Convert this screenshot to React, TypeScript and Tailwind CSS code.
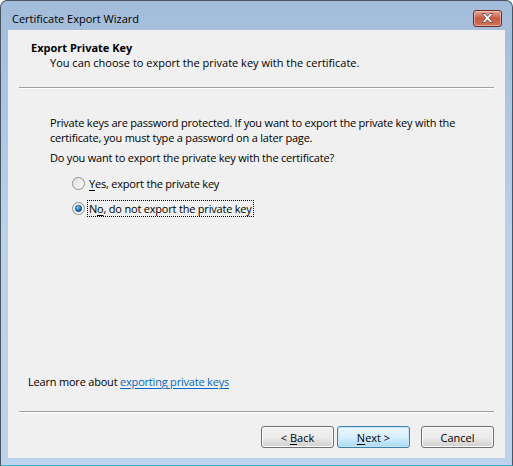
function Radio({ checked }: { checked?: boolean }) {
  return (
    <svg width="13" height="13" viewBox="0 0 13 13" className="shrink-0">
      <defs>
        <linearGradient id="rbg" x1="0" y1="0" x2="1" y2="1">
          <stop offset="0" stopColor="#d6d6d6" />
          <stop offset="1" stopColor="#ffffff" />
        </linearGradient>
        <radialGradient id="rdot" cx="0.4" cy="0.35" r="0.7">
          <stop offset="0" stopColor="#8fd1ff" />
          <stop offset="0.5" stopColor="#2a7fc8" />
          <stop offset="1" stopColor="#0d3f7a" />
        </radialGradient>
      </defs>
      <circle cx="6.5" cy="6.5" r="6" fill="url(#rbg)" stroke="#8e8f8f" strokeWidth="1" />
      <circle cx="6.5" cy="6.5" r="4.5" fill="none" stroke="#f4f4f4" strokeWidth="1" />
      {checked && <circle cx="6.5" cy="6.5" r="3.2" fill="url(#rdot)" stroke="#1d4f86" strokeWidth="0.6" />}
    </svg>
  );
}

function CloseButton() {
  return (
    <div className="w-[29px] h-[17px] rounded-[3px] border border-[#6d2b25] bg-gradient-to-b from-[#e6a797] via-[#c75a41] to-[#d0745c] flex items-center justify-center shadow-[inset_0_0_0_1px_rgba(255,220,210,0.5)]">
      <svg width="13" height="10" viewBox="0 0 13 10">
        <path
          d="M1 0.5 H4 L6.5 3.3 L9 0.5 H12 L8.2 5 L12 9.5 H9 L6.5 6.7 L4 9.5 H1 L4.8 5 Z"
          fill="#ffffff"
          stroke="#5a3a36"
          strokeWidth="0.7"
          strokeLinejoin="round"
        />
      </svg>
    </div>
  );
}

function Button({ children, primary }: { children: React.ReactNode; primary?: boolean }) {
  return (
    <div
      className={
        primary
          ? "w-[73px] h-[22px] rounded-[3px] border border-[#3c7fb1] bg-gradient-to-b from-[#eaf6fd] via-[#d9f0fc] to-[#a7d9f5] shadow-[inset_0_0_0_1px_#c6e6f8] flex items-center justify-center text-black"
          : "w-[73px] h-[22px] rounded-[3px] border border-[#707070] bg-gradient-to-b from-[#f2f2f2] via-[#ebebeb] to-[#cfcfcf] shadow-[inset_0_0_0_1px_#fcfcfc] flex items-center justify-center text-black"
      }
    >
      <span className="whitespace-pre">{children}</span>
    </div>
  );
}

function Separator() {
  return <div className="border-t border-[#a0a0a0] border-b border-b-white" />;
}

export default function App() {
  return (
    <div className="w-[513px] h-[466px] bg-white font-['Open_Sans',sans-serif] text-[11px] leading-[15px] text-black">
      <div className="w-full h-full rounded-t-[7px] border border-[#4a5563] border-b-[#36b0d6] bg-gradient-to-b from-[#a2bcda] via-[#bad1ea] to-[#bcd3eb] flex flex-col px-[7px] pb-[7px]">
        {/* title bar */}
        <div className="h-[29px] flex items-center pt-[5px] pl-[4px] pr-[3px]">
          <span className="flex-1 text-[11px] text-black">Certificate Export Wizard</span>
          <CloseButton />
        </div>

        {/* client area */}
        <div className="flex-1 bg-[#f0f0f0] flex flex-col px-[11px] pb-[10px] tracking-[-0.2px]">
          <div className="pt-[10px] pl-[12px] tracking-normal">
            <div className="font-bold">Export Private Key</div>
            <div className="pl-[19px]">You can choose to export the private key with the certificate.</div>
          </div>

          <div className="mt-[17px]">
            <Separator />
          </div>

          <div className="pl-[31px] mt-[26px]">
            <div className="whitespace-nowrap">
              Private keys are password protected. If you want to export the private key with the
            </div>
            <div className="whitespace-nowrap">certificate, you must type a password on a later page.</div>
            <div className="mt-[5px]">Do you want to export the private key with the certificate?</div>

            <div className="mt-[10px] pl-[22px] flex flex-col gap-[8px]">
              <div className="h-[17px] flex items-center gap-[3px]">
                <Radio />
                <span className="px-[1px]">
                  <span className="underline underline-offset-2">Y</span>es, export the private key
                </span>
              </div>
              <div className="h-[17px] flex items-center gap-[3px]">
                <Radio checked />
                <span className="px-[1px] outline outline-1 outline-dotted outline-black">
                  N<span className="underline underline-offset-2">o</span>, do not export the private key
                </span>
              </div>
            </div>
          </div>

          <div className="flex-1" />

          <div className="pl-[9px]">
            Learn more about{" "}
            <span className="text-[#0066cc] underline underline-offset-2">exporting private keys</span>
          </div>

          <div className="mt-[22px]">
            <Separator />
          </div>

          <div className="mt-[13px] flex justify-end tracking-normal">
            <Button>
              {"< "}
              <span className="underline underline-offset-2">B</span>ack
            </Button>
            <div className="w-[3px]" />
            <Button primary>
              <span className="underline underline-offset-2">N</span>ext &gt;
            </Button>
            <div className="w-[11px]" />
            <Button>Cancel</Button>
          </div>
        </div>
      </div>
    </div>
  );
}
